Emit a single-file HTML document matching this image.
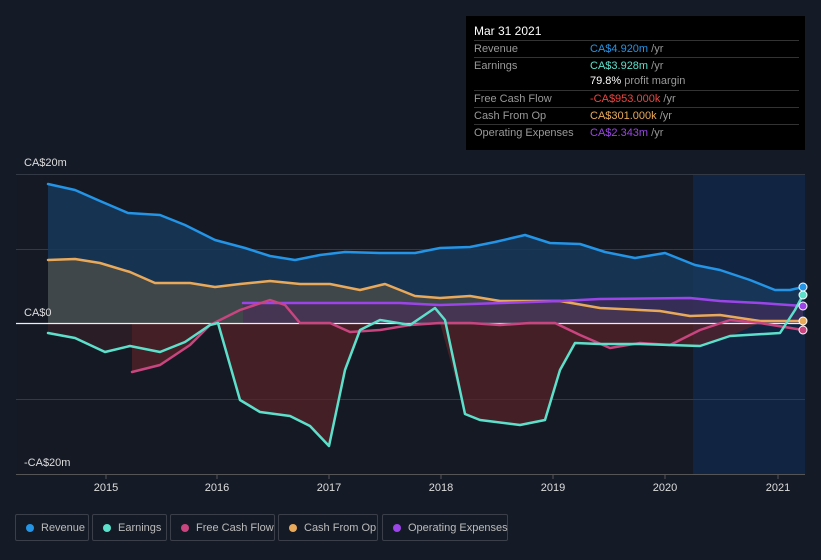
<!DOCTYPE html>
<html><head><style>
body{margin:0;width:821px;height:560px;background:#151b26;font-family:"Liberation Sans",sans-serif;overflow:hidden;position:relative}
.tt{position:absolute;left:466px;top:16px;width:339px;height:134px;background:#000;color:#fff;font-size:11px}
.tt .h{position:absolute;left:8px;top:8px;font-size:12px}
.row{position:absolute;left:8px;width:325px;border-top:1px solid #333;height:16px;line-height:16px}
.row .l{position:absolute;left:0;color:#999}
.row .v{position:absolute;left:116px;color:#999;white-space:nowrap}
.leg{position:absolute;top:514px;height:27px;border:1px solid #3a3f4a;border-radius:2px;color:#bbb;font-size:11px;line-height:26px;box-sizing:border-box;white-space:nowrap}
.leg i{position:absolute;left:10px;top:9px;width:8px;height:8px;border-radius:50%}
.leg span{position:absolute;left:25px;white-space:nowrap}
</style></head><body>
<svg width="821" height="560" style="position:absolute;left:0;top:0">
<rect x="693" y="174" width="112" height="300" fill="#10274a" opacity="0.8"/>
<rect x="17" y="174" width="676" height="300" fill="#131821" opacity="0.5"/>
<g stroke="#333a45" stroke-width="1"><line x1="16" y1="174.5" x2="805" y2="174.5"/><line x1="16" y1="249.5" x2="805" y2="249.5"/><line x1="16" y1="399.5" x2="805" y2="399.5"/><line x1="16" y1="474.5" x2="805" y2="474.5" stroke="#555"/></g>
<g stroke="#555"><line x1="106" y1="474" x2="106" y2="479"/><line x1="217" y1="474" x2="217" y2="479"/><line x1="329" y1="474" x2="329" y2="479"/><line x1="441" y1="474" x2="441" y2="479"/><line x1="553" y1="474" x2="553" y2="479"/><line x1="665" y1="474" x2="665" y2="479"/><line x1="778" y1="474" x2="778" y2="479"/></g>
<polygon fill="#17385a" opacity="0.85" points="48,323 48,184 75,190 100,201 128,213 160,215 185,225 215,240 245,248 270,256 295,260 320,255 345,252 380,253 415,253 440,248 470,247 495,242 525,235 550,243 580,244 605,252 635,258 665,253 695,265 720,270 750,280 775,290 790,290 803,287 803,323"/>
<polygon fill="#4a4c48" opacity="0.8" points="48,323 48,260 75,259 100,263 130,272 155,283 190,283 215,287 240,284 270,281 300,284 330,284 360,290 385,284 415,296 440,298 470,296 500,301 560,301 600,308 660,311 690,316 720,315 760,321 803,321 803,323"/>
<polygon fill="#4a2a5a" opacity="0.6" points="243,323 243,303 400,303 440,305 560,301 600,299 690,298 720,301 760,303 803,306 803,323"/>
<polygon fill="#5a2228" opacity="0.7" points="132,323 132,372 160,365 190,345 210,325 218,323 240,400 260,412 290,416 310,426 330,446 345,370 360,330 380,323 440,323 465,414 480,420 520,425 545,420 560,370 575,343 600,344 640,344 700,346 730,336 760,323"/>
<polygon fill="#3a2028" opacity="0.6" points="48,323 48,333 75,338 105,352 130,346 132,346 132,323"/>
<line x1="16" y1="323.5" x2="805" y2="323.5" stroke="#eee" stroke-width="1.2"/>
<g fill="none" stroke-width="2.5" stroke-linejoin="round" stroke-linecap="round">
<polyline stroke="#2394e6" points="48,184 75,190 100,201 128,213 160,215 185,225 215,240 245,248 270,256 295,260 320,255 345,252 380,253 415,253 440,248 470,247 495,242 525,235 550,243 580,244 605,252 635,258 665,253 695,265 720,270 750,280 775,290 790,290 803,287"/>
<polyline stroke="#e8a95a" points="48,260 75,259 100,263 130,272 155,283 190,283 215,287 240,284 270,281 300,284 330,284 360,290 385,284 415,296 440,298 470,296 500,301 560,301 600,308 660,311 690,316 720,315 760,321 803,321"/>
<polyline stroke="#9b45e8" points="243,303 400,303 440,305 560,301 600,299 690,298 720,301 760,303 803,306"/>
<polyline stroke="#c8457f" points="132,372 160,365 190,345 210,325 240,310 270,300 285,305 300,323 330,323 350,332 380,330 410,325 440,323 470,323 500,325 530,323 555,323 580,335 610,348 640,343 670,345 700,330 730,320 760,323 803,330"/>
<polyline stroke="#5de0cb" points="48,333 75,338 105,352 130,346 160,352 185,342 210,325 218,323 240,400 260,412 290,416 310,426 329,446 345,370 360,330 380,320 410,325 435,308 445,320 465,414 480,420 520,425 545,420 560,370 575,343 600,344 640,344 700,346 730,336 780,333 795,310 803,295"/>
</g>
<g stroke="#fff" stroke-width="1"><circle cx="803" cy="287" r="4" fill="#2394e6"/><circle cx="803" cy="295" r="4" fill="#5de0cb"/><circle cx="803" cy="306" r="4" fill="#9b45e8"/><circle cx="803" cy="321" r="4" fill="#e8a95a"/><circle cx="803" cy="330" r="4" fill="#c8457f"/></g>
<g fill="#ddd" font-size="11" font-family="Liberation Sans,sans-serif"><text x="24" y="166">CA$20m</text><text x="24" y="316">CA$0</text><text x="24" y="466">-CA$20m</text>
<g text-anchor="middle"><text x="106" y="491">2015</text><text x="217" y="491">2016</text><text x="329" y="491">2017</text><text x="441" y="491">2018</text><text x="553" y="491">2019</text><text x="665" y="491">2020</text><text x="778" y="491">2021</text></g></g>
</svg>
<div class="tt"><div class="h">Mar 31 2021</div>
<div class="row" style="top:24px"><span class="l">Revenue</span><span class="v"><b style="color:#2394e6;font-weight:normal">CA$4.920m</b> /yr</span></div>
<div class="row" style="top:41px"><span class="l">Earnings</span><span class="v"><b style="color:#5de0cb;font-weight:normal">CA$3.928m</b> /yr</span></div>
<div class="row" style="top:57px;border-top:none"><span class="v"><b style="color:#fff;font-weight:normal">79.8%</b> profit margin</span></div>
<div class="row" style="top:74px"><span class="l">Free Cash Flow</span><span class="v"><b style="color:#f0443f;font-weight:normal">-CA$953.000k</b> /yr</span></div>
<div class="row" style="top:91px"><span class="l">Cash From Op</span><span class="v"><b style="color:#e8a95a;font-weight:normal">CA$301.000k</b> /yr</span></div>
<div class="row" style="top:108px"><span class="l">Operating Expenses</span><span class="v"><b style="color:#9b45e8;font-weight:normal">CA$2.343m</b> /yr</span></div>
</div>
<div class="leg" style="left:15px;width:74px"><i style="background:#2394e6"></i><span>Revenue</span></div>
<div class="leg" style="left:92px;width:75px"><i style="background:#5de0cb"></i><span>Earnings</span></div>
<div class="leg" style="left:170px;width:105px"><i style="background:#c8457f"></i><span>Free Cash Flow</span></div>
<div class="leg" style="left:278px;width:100px"><i style="background:#e8a95a"></i><span>Cash From Op</span></div>
<div class="leg" style="left:382px;width:126px"><i style="background:#9b45e8"></i><span>Operating Expenses</span></div>
</body></html>
